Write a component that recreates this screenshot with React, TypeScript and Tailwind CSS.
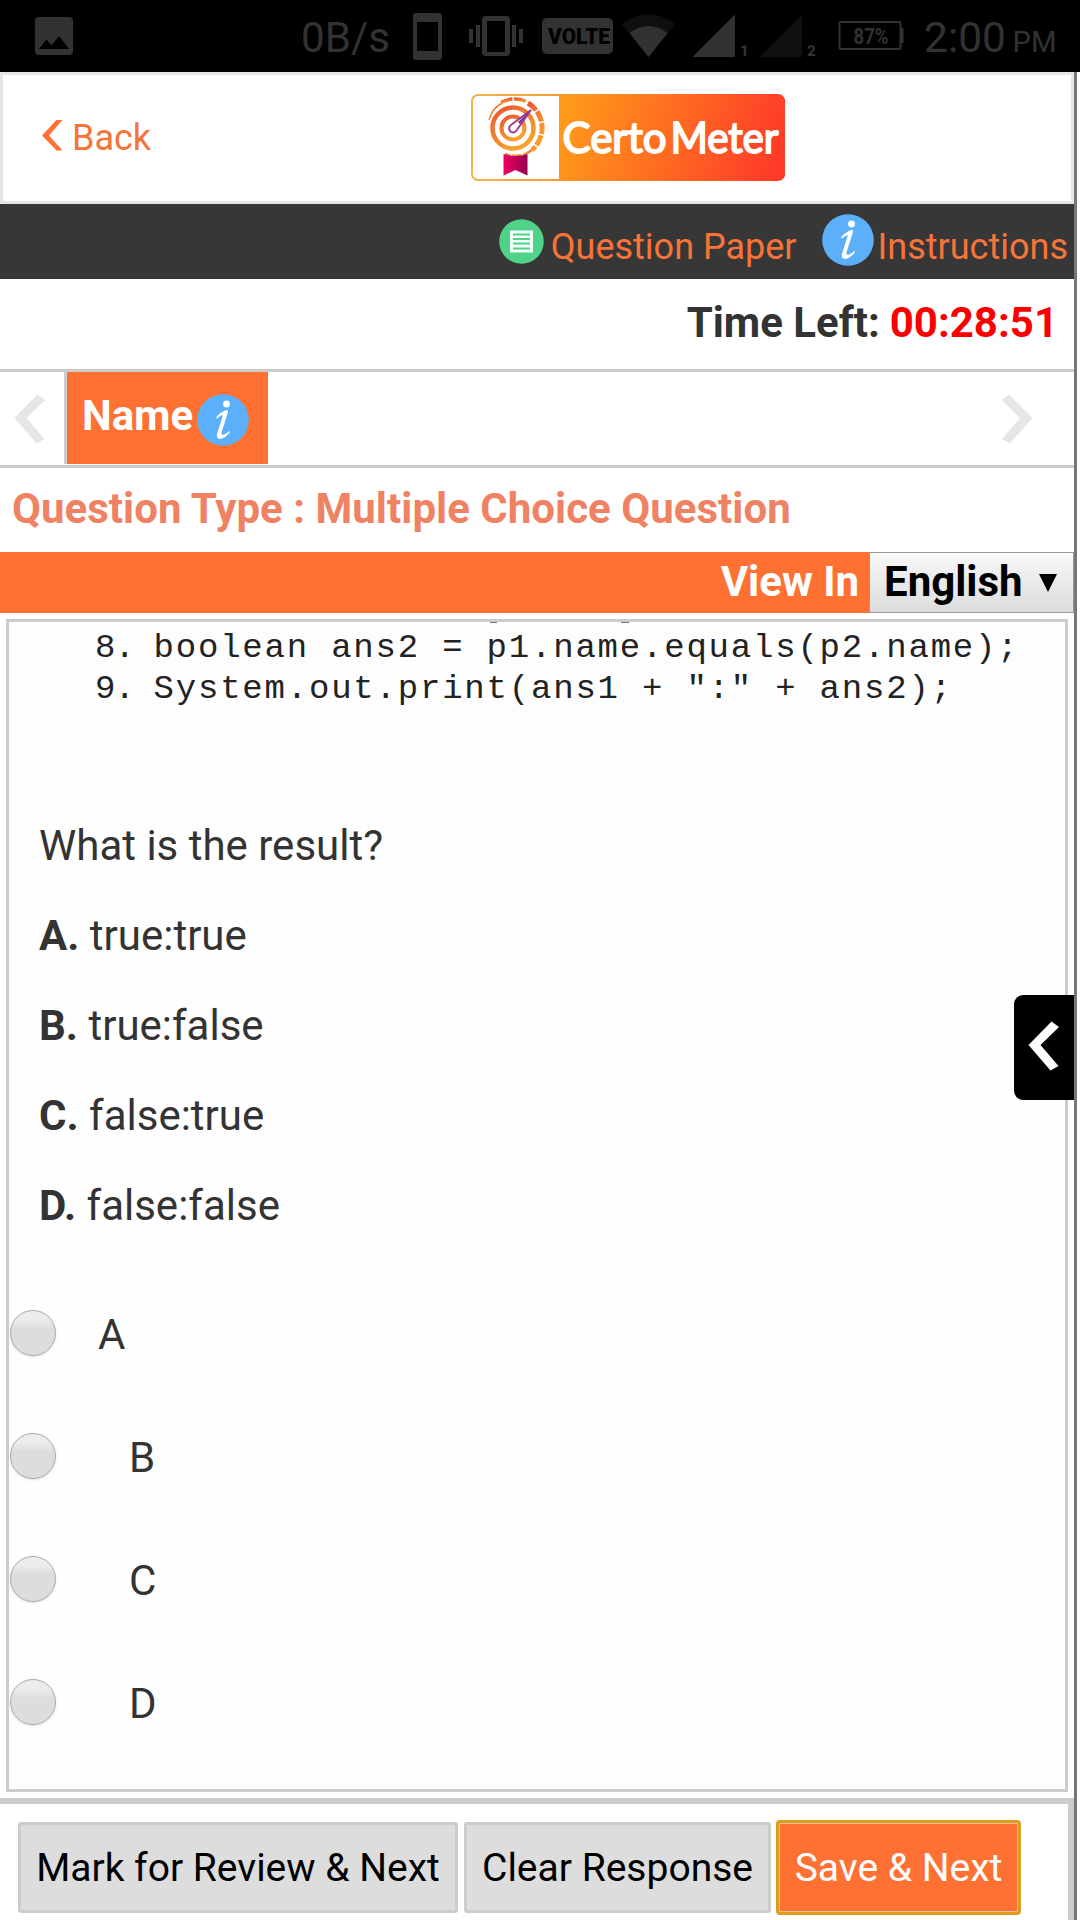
import React from "react";

const ROBOTO = "font-['Roboto',sans-serif]";

function StatusBar() {
  return (
    <div className="h-[72px] w-full bg-black">
      <svg width="1080" height="72" viewBox="0 0 1080 72" fill="#323232" fontFamily="Roboto, sans-serif">
        <path fillRule="evenodd" d="M39 17h30a4 4 0 0 1 4 4v30a4 4 0 0 1-4 4H39a4 4 0 0 1-4-4V21a4 4 0 0 1 4-4ZM39 49h30L59 36l-7.500 9.500-5-6Z" />
        <text x="301" y="52" fontSize="42" textLength="89" lengthAdjust="spacingAndGlyphs">0B/s</text>
        <path fillRule="evenodd" d="M416 13h23a3 3 0 0 1 3 3v41a3 3 0 0 1-3 3h-23a3 3 0 0 1-3-3V16a3 3 0 0 1 3-3ZM417 22v29h21V22Z" />
        <path fillRule="evenodd" d="M486 16h20a4 4 0 0 1 4 4v32a4 4 0 0 1-4 4h-20a4 4 0 0 1-4-4V20a4 4 0 0 1 4-4ZM487 21v31h18V21ZM469 29h4v14h-4ZM476 25h4v22h-4ZM512 25h4v22h-4ZM519 29h4v14h-4Z" />
        <rect x="542" y="18" width="71" height="36" rx="5" />
        <text x="548" y="44" fontSize="22" fontWeight="900" fill="#000" textLength="62" lengthAdjust="spacingAndGlyphs">VOLTE</text>
        <path d="M621.500 24Q648.500 4.500 675.500 24L648.500 57Z" fill="#0f0f0f" />
        <path d="M629.500 33Q648.500 19 667.500 33L648.500 57Z" />
        <path d="M692.500 57H735V14.500Z" />
        <path d="M759.500 57H802V14.500Z" fill="#0f0f0f" />
        <text x="740" y="56" fontSize="15" fontWeight="900">1</text>
        <text x="807" y="56" fontSize="15" fontWeight="900">2</text>
        <rect x="839.500" y="22" width="61" height="27" rx="1" fill="none" stroke="#323232" strokeWidth="2" />
        <path d="M901 28h2.500v15H901Z" />
        <text x="853.500" y="44" fontSize="22" fontWeight="700" textLength="35" lengthAdjust="spacingAndGlyphs">87%</text>
        <text x="924" y="52" fontSize="42" textLength="82" lengthAdjust="spacingAndGlyphs">2:00</text>
        <text x="1012.500" y="52" fontSize="29" textLength="44" lengthAdjust="spacingAndGlyphs">PM</text>
      </svg>
    </div>
  );
}

function Logo() {
  return (
    <svg width="315" height="88" viewBox="0 0 315 88" className="shrink-0 overflow-visible">
      <defs>
        <linearGradient id="brand" gradientUnits="userSpaceOnUse" x1="88" y1="20" x2="300" y2="88">
          <stop offset="0" stopColor="#ff9c1a" />
          <stop offset="1" stopColor="#ff3a29" />
        </linearGradient>
        <linearGradient id="frame" x1="0" y1="0" x2="1" y2="0">
          <stop offset="0" stopColor="#eeb54a" />
          <stop offset="0.5" stopColor="#ff8a22" />
          <stop offset="1" stopColor="#ff3a29" />
        </linearGradient>
        <linearGradient id="ring" x1="0" y1="0" x2="0.6" y2="1">
          <stop offset="0" stopColor="#ee5530" />
          <stop offset="1" stopColor="#f9a32c" />
        </linearGradient>
        <linearGradient id="ribbon" x1="0" y1="0" x2="1" y2="0">
          <stop offset="0" stopColor="#f00060" />
          <stop offset="1" stopColor="#980052" />
        </linearGradient>
      </defs>
      <rect x="1" y="1" width="312" height="85" rx="6" fill="#fff" stroke="url(#frame)" strokeWidth="2" />
      <path d="M88 1h220a6 6 0 0 1 6 6v73a6 6 0 0 1-6 6H88Z" fill="url(#brand)" />
      <g fill="none" stroke="url(#ring)">
        <circle cx="42" cy="34" r="20.500" strokeWidth="4.500" />
        <circle cx="42" cy="34" r="11.500" strokeWidth="4" />
        <path d="M18 26A27 27 0 0 1 31 9" strokeWidth="1.500" />
        <path d="M30 8.500A28 28 0 0 1 56 8" strokeWidth="3.500" strokeDasharray="12 1.500" />
        <path d="M57 9A29 29 0 0 1 61 56" strokeWidth="5" strokeDasharray="11 1.500" />
        <path d="M61 56A28 28 0 0 1 34 60" strokeWidth="2.500" strokeDasharray="10 1.500" />
      </g>
      <path d="M60 16L40 31a4 4 0 1 0 5.500 5.500Z" fill="#fff" stroke="#a53b91" strokeWidth="2" />
      <path d="M60 16L47 28l2 2Z" fill="#70378f" />
      <path d="M32.500 60q12 4 24 0v21.500L44.500 76l-12 5.500Z" fill="url(#ribbon)" />
      <g fill="#fff" stroke="#fff" strokeWidth="1.800" fontFamily="Lato, sans-serif" fontSize="43" fontWeight="400">
        <text x="91.500" y="59" textLength="104" lengthAdjust="spacingAndGlyphs">Certo</text>
        <text x="199.500" y="59" textLength="108" lengthAdjust="spacingAndGlyphs">Meter</text>
      </g>
    </svg>
  );
}

function InfoIcon({ className }: { className: string }) {
  return (
    <svg width="52" height="52" viewBox="0 0 52 52" className={className}>
      <circle cx="26" cy="26" r="25.800" fill="#5cb0fa" />
      <circle cx="29.500" cy="10" r="3.400" fill="#fff" />
      <path d="M19 23.500C22 19.500 26 17 29.500 16Q31.500 15.500 31 18L24.500 38.500Q24 41.500 27 40.500Q30 39 32.500 37Q33.500 38 32 39.500Q27.500 44.500 23 45Q19 44.500 20 40L26 21Q23 21.500 20 24.500Z" fill="#fff" />
    </svg>
  );
}

function PaperIcon({ className }: { className: string }) {
  return (
    <svg width="45" height="45" viewBox="0 0 45 45" className={className}>
      <circle cx="22.500" cy="22.500" r="22.300" fill="#4fd388" />
      <rect x="11" y="11.500" width="23" height="22" fill="#f3fffb" />
      <path d="M14 15.500h17M14 20h17M14 24.500h17M14 29.500h17" stroke="#4fd388" strokeWidth="2" />
    </svg>
  );
}

function Chevron({ color, flip }: { color: string; flip?: boolean }) {
  return (
    <svg width="32" height="50" viewBox="0 0 32 50">
      <path d={flip ? "M8 0.500L31.500 24L9 49.500L1 45L19 24L1 6Z" : "M23.500 0.500L0.500 24L22.500 49.500L30.500 45L12.500 24L31 6Z"} fill={color} />
    </svg>
  );
}

const codeLines = [
  ["8. ", "boolean ans2 = p1.name.equals(p2.name);"],
  ["9. ", "System.out.print(ans1 + \":\" + ans2);"],
];

const answers = [
  ["A.", "true:true"],
  ["B.", "true:false"],
  ["C.", "false:true"],
  ["D.", "false:false"],
];

export default function App() {
  return (
    <div className={`${ROBOTO} h-[1920px] w-[1080px] overflow-hidden bg-white text-[42px] leading-[48px] whitespace-nowrap text-[#333]`}>
      <StatusBar />
      <div className="flex h-[1848px]">
        <main className="relative flex w-[1074px] shrink-0 flex-col">
          <header className="flex h-[132px] shrink-0 items-start border-3 border-[#e6e6e6]">
            <div className="flex w-[468px] items-start pt-[43px] pl-[39px] text-[36px] leading-[40px] text-[#f77439]">
              <svg width="21" height="31" viewBox="0 0 21 31" className="mt-[2px]">
                <path d="M14.500 0H20.500L7 15.500L20.500 30.500H14.500L0 15.500Z" fill="#ff7033" />
              </svg>
              <span className="ml-[9px]">Back</span>
            </div>
            <div className="pt-[19px]"><Logo /></div>
          </header>

          <nav className="flex h-[75px] shrink-0 items-start justify-end bg-[#373737] pr-[6px] text-[36px] leading-[40px] text-[#f77439]">
            <PaperIcon className="mt-[15px]" />
            <span className="mt-[23px] ml-[7px]">Question Paper</span>
            <InfoIcon className="mt-[10px] ml-[25px]" />
            <span className="mt-[23px] ml-[4px]">Instructions</span>
          </nav>

          <div className="flex h-[90px] shrink-0 justify-end pt-[20px] pr-[16px] font-bold">
            <span>Time Left:</span>
            <span className="ml-[10px] text-[#fb0000]">00:28:51</span>
          </div>

          <div className="flex h-[99px] shrink-0 border-y-3 border-[#ccc]">
            <div className="w-[64px] pt-[22px] pl-[14px]"><Chevron color="#e6e6e6" /></div>
            <div className="flex h-[92px] w-[204px] items-start border-l-3 border-[#ccc] bg-[#ff7033] pl-[15px] font-bold text-white">
              <span className="mt-[20px] w-[115px]">Name</span>
              <InfoIcon className="mt-[22px]" />
            </div>
            <div className="ml-auto w-[73px] pt-[22px]"><Chevron color="#e6e6e6" flip /></div>
          </div>

          <h1 className="h-[84px] shrink-0 pt-[17px] pl-[12px] font-bold tracking-[0.02px] text-[#ef8262]">Question Type : Multiple Choice Question</h1>

          <div className="flex h-[61px] shrink-0 bg-[#ff7033] font-bold">
            <div className="w-[869px] pt-[6px] pr-[10px] text-right text-white">View In</div>
            <button className="flex w-[205px] items-start border border-[#999] bg-linear-to-b from-[#f8f8f8] to-[#dcdcdc] pt-[5px] pl-[14px] text-black">
              <span className="w-[155px] text-left">English</span>
              <svg width="18" height="18" viewBox="0 0 18 18" className="mt-[16px]"><path d="M0 0h18L9 18Z" /></svg>
            </button>
          </div>

          <section className="mt-[6px] ml-[6px] h-[1173px] w-[1062px] shrink-0 overflow-hidden border-3 border-[#ccc] bg-[#fefefe]">
            <div className="relative h-[104px] w-[1027px] bg-[#fdfdfd] pt-[6px] pl-[86px]">
              <i className="absolute top-0 left-[481px] h-[1px] w-[7px] bg-[#777]" />
              <i className="absolute top-0 left-[612px] h-[1px] w-[8px] bg-[#777]" />
              {codeLines.map(([num, code]) => (
                <pre key={num} className="font-['Liberation_Mono',monospace] text-[34px] leading-[41px] tracking-[1.8px] text-[#222]">
                  <span className="tracking-[-0.9px]">{num}</span>{code}
                </pre>
              ))}
            </div>
            <div className="mt-[75px] pl-[30px] leading-[90px]">
              <p>What is the result?</p>
              {answers.map(([key, text]) => (
                <p key={key}><b>{key}</b> {text}</p>
              ))}
            </div>
            <div className="mt-[22px] leading-[123px]">
              {["A", "B", "C", "D"].map((key) => (
                <label key={key} className="flex h-[123px] items-start">
                  <span className="mt-[37px] ml-[1px] size-[46px] rounded-full border border-[#aaa] bg-linear-to-b from-[#ececec] from-20% to-[#ddd] to-40% shadow-sm" />
                  <span className={key === "A" ? "ml-[42px]" : "ml-[73px]"}>{key}</span>
                </label>
              ))}
            </div>
          </section>

          <footer className="mt-[6px] flex h-[122px] shrink-0 items-start border-t-6 border-r-6 border-[#ccc] pl-[18px] text-[39px] text-black">
            <button className="mt-[18px] h-[91px] w-[440px] rounded-[3px] border-3 border-[#ccc] bg-[#ddd]">Mark for Review &amp; Next</button>
            <button className="mt-[18px] ml-[6px] h-[91px] w-[307px] rounded-[3px] border-3 border-[#ccc] bg-[#ddd]">Clear Response</button>
            <button className="mt-[16px] ml-[5px] h-[95px] w-[245px] rounded-[4px] border-3 border-[#dc9c20] bg-[#ff7033] text-white inset-ring inset-ring-[#eac08c]">Save &amp; Next</button>
          </footer>

          <button className="absolute top-[923px] right-0 flex h-[105px] w-[60px] items-start rounded-l-[9px] bg-black pt-[26px] pl-[14px]">
            <Chevron color="#fff" />
          </button>
        </main>
        <div className="w-[3px] bg-[#777]" />
      </div>
    </div>
  );
}
